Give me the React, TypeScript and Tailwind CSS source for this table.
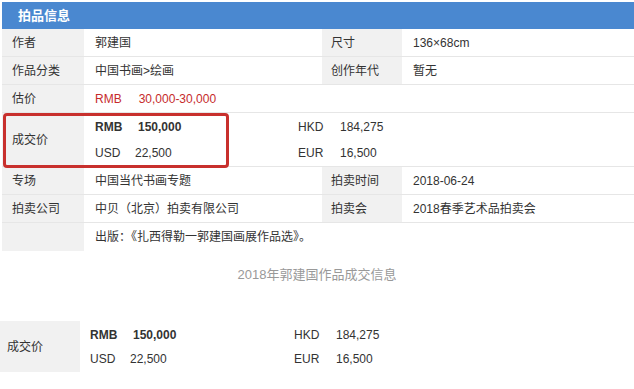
import React from "react";

const label = "bg-[#f1f1f1] h-full flex items-center";

function Row({
  l1,
  v1,
  l2,
  v2,
  last,
}: {
  l1: string;
  v1: React.ReactNode;
  l2?: string;
  v2?: string;
  last?: boolean;
}) {
  return (
    <div className={`flex h-[28px] ${last ? "" : "border-b border-[#e6e6e6]"}`}>
      <div className={`${label} w-[82px] pl-[10px]`}>{l1}</div>
      <div className="w-[238px] pl-[11px] flex items-center">{v1}</div>
      {l2 !== undefined && (
        <>
          <div className={`${label} w-[80px] pl-[9px]`}>{l2}</div>
          <div className="flex-1 pl-[11px] flex items-center">{v2}</div>
        </>
      )}
    </div>
  );
}

function Deal({ hkdAt, rowGap }: { hkdAt: string; rowGap: string }) {
  return (
    <div className={`flex flex-col ${rowGap}`}>
      <div className="flex">
        <div className={`${hkdAt} flex`}>
          <span className="font-bold w-[43px]">RMB</span>
          <span className="font-bold">150,000</span>
        </div>
        <div className="flex">
          <span className="w-[42px]">HKD</span>
          <span>184,275</span>
        </div>
      </div>
      <div className="flex">
        <div className={`${hkdAt} flex`}>
          <span className="w-[40px]">USD</span>
          <span>22,500</span>
        </div>
        <div className="flex">
          <span className="w-[42px]">EUR</span>
          <span>16,500</span>
        </div>
      </div>
    </div>
  );
}

export default function App() {
  return (
    <div
      className="w-[634px] h-[389px] bg-white text-[12px] leading-[16px] text-[#333] overflow-hidden"
      style={{ fontFamily: '"Liberation Sans", "Noto Sans CJK SC", sans-serif' }}
    >
      <div className="ml-[2px] pt-[2px]">
        <div className="h-[27px] bg-[#4a88d0] text-white font-bold text-[13px] pl-[16px] flex items-center">
          拍品信息
        </div>
        <Row l1="作者" v1="郭建国" l2="尺寸" v2="136×68cm" />
        <Row l1="作品分类" v1="中国书画>绘画" l2="创作年代" v2="暂无" />
        <Row
          l1="估价"
          v1={
            <span className="text-[#c62b2b]">
              <span className="mr-[17px]">RMB</span>30,000-30,000
            </span>
          }
        />
        <div className="relative flex h-[54px] border-b border-[#e6e6e6]">
          <div className={`${label} w-[82px] pl-[10px]`}>成交价</div>
          <div className="flex-1 pl-[11px] flex items-center">
            <Deal hkdAt="w-[203px]" rowGap="gap-[10px]" />
          </div>
          <div className="absolute left-[1px] top-[0px] w-[226px] h-[55px] border-[3px] border-[#c8302d] rounded-[4px]" />
        </div>
        <Row l1="专场" v1="中国当代书画专题" l2="拍卖时间" v2="2018-06-24" />
        <Row l1="拍卖公司" v1="中贝（北京）拍卖有限公司" l2="拍卖会" v2="2018春季艺术品拍卖会" />
        <Row l1="" v1="出版：《扎西得勒一郭建国画展作品选》。" last />
      </div>

      <div className="mt-[16px] text-center text-[13px] text-[#999]">2018年郭建国作品成交信息</div>

      <div className="mt-[38px] flex h-[51px]">
        <div className={`${label} w-[80px] pl-[7px]`}>成交价</div>
        <div className="flex-1 pl-[10px] flex items-center">
          <Deal hkdAt="w-[204px]" rowGap="gap-[8px]" />
        </div>
      </div>
    </div>
  );
}
